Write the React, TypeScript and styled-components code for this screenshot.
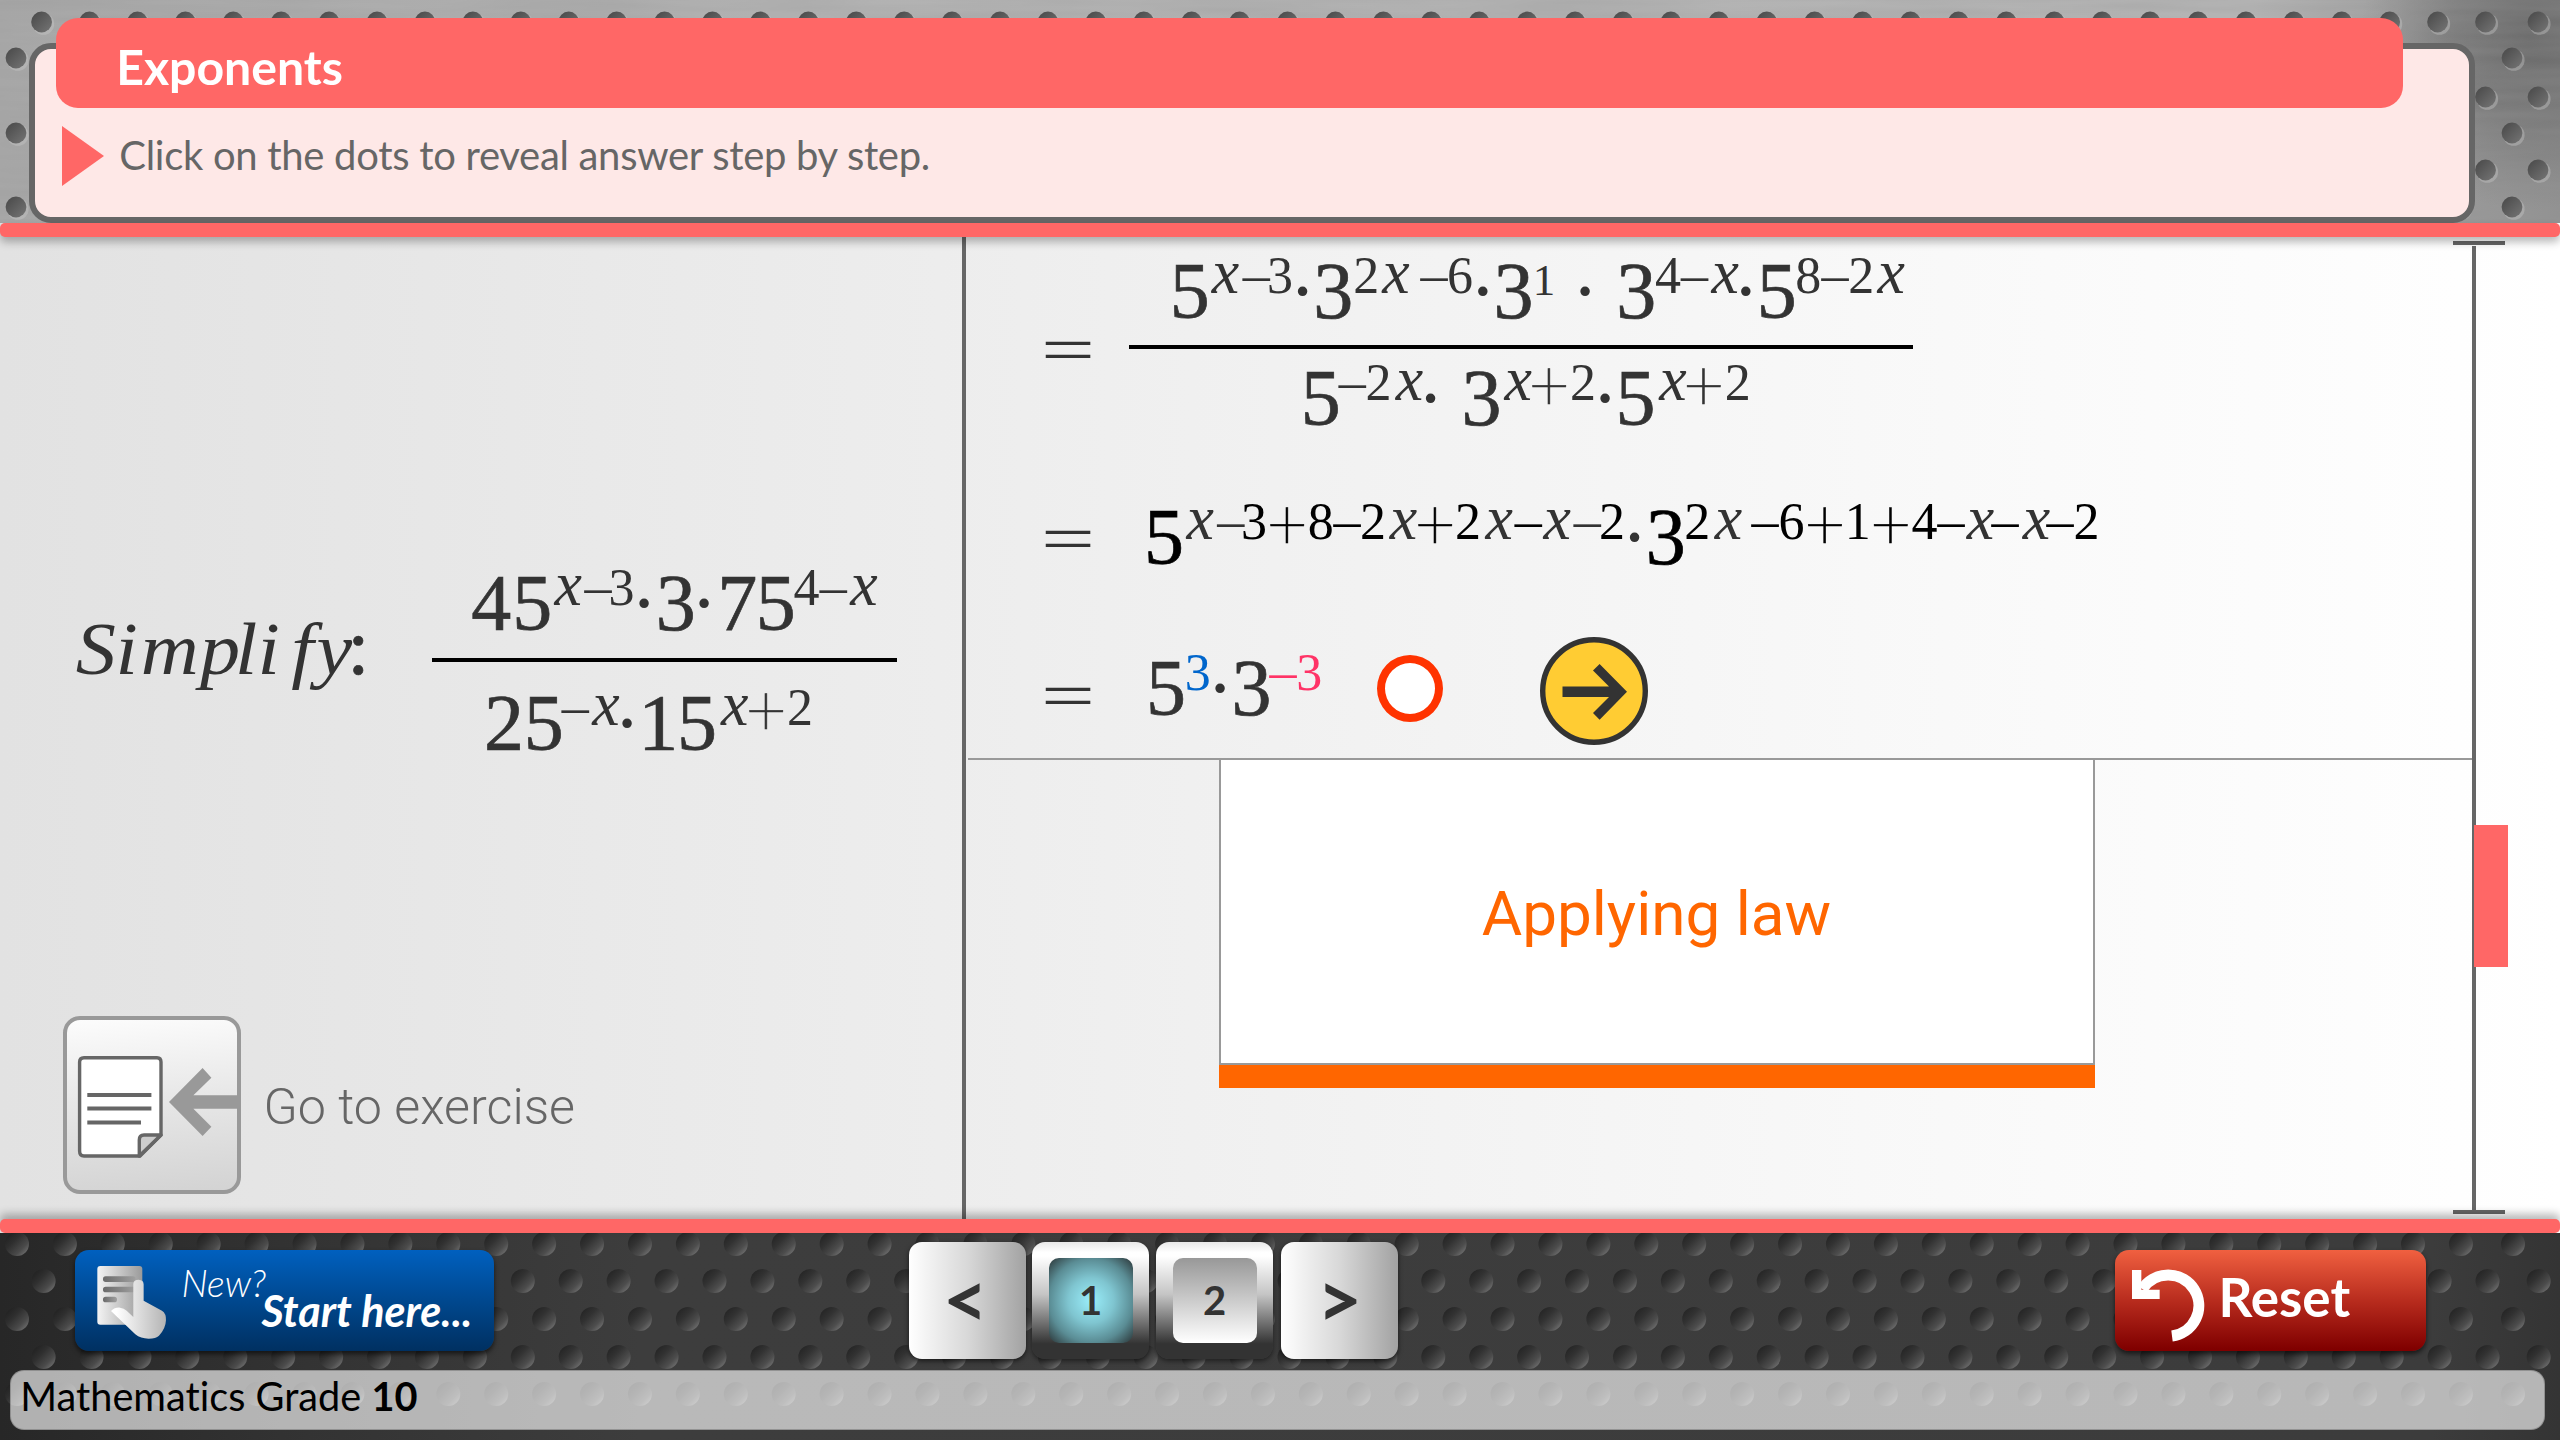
import React from 'react';
import styled, { createGlobalStyle } from 'styled-components';

const CORAL = '#ff6766';
const GREY = '#666666';

const GlobalStyle = createGlobalStyle`
  * { box-sizing: border-box; }
  html, body { margin: 0; padding: 0; overflow: hidden; }
  body { font-family: Lato, "Liberation Sans", sans-serif; font-variant-ligatures: none; }
`;

const Screen = styled.div`
  width: 2560px;
  height: 1440px;
  display: flex;
  flex-direction: column;
  overflow: hidden;
  background: linear-gradient(90deg, #e2e2e2 0%, #eeeeee 40%, #f9f9f9 76%, #ffffff 100%);
`;

/* ---------- perforated metal ---------- */

const MetalSvg = styled.svg`
  position: absolute;
  inset: 0;
  display: block;
`;

const columns = (phase: number, last: number) => [
  ...Array.from({ length: 52 }, (_, i) => phase + i * 47.92),
  last,
];

const perforation = (rows: { y: number; offset: boolean }[], a: [number, number], b: [number, number]) =>
  rows.flatMap((r) => (r.offset ? columns(b[0], b[1]) : columns(a[0], a[1])).map((x) => ({ x, y: r.y })));

const headerHoles = perforation(
  [
    { y: 22, offset: false },
    { y: 58, offset: true },
    { y: 97, offset: false },
    { y: 133, offset: true },
    { y: 170, offset: false },
    { y: 207, offset: true },
  ],
  [41.6, 2538],
  [16, 2512],
);

const footerDents = perforation(
  [
    { y: 11, offset: false },
    { y: 48, offset: true },
    { y: 86, offset: false },
    { y: 124, offset: true },
    { y: 161, offset: false },
  ],
  [17, 2513],
  [43.6, 2538.7],
);

const HeaderMetal = () => (
  <MetalSvg width="2560" height="223" viewBox="0 0 2560 223">
    <defs>
      <linearGradient id="hm" x1="0" y1="0" x2="1" y2="0">
        <stop offset="0" stopColor="#a8a8a8" />
        <stop offset="0.3" stopColor="#b2b2b2" />
        <stop offset="0.88" stopColor="#b4b4b4" />
        <stop offset="0.96" stopColor="#999999" />
        <stop offset="1" stopColor="#929292" />
      </linearGradient>
      <radialGradient id="hv" gradientUnits="userSpaceOnUse" cx="2530" cy="40" r="170">
        <stop offset="0" stopColor="#484848" stopOpacity="0.55" />
        <stop offset="0.5" stopColor="#505050" stopOpacity="0.35" />
        <stop offset="1" stopColor="#606060" stopOpacity="0" />
      </radialGradient>
      <linearGradient id="hole" x1="0" y1="0" x2="1" y2="1">
        <stop offset="0.1" stopColor="#4c4c4c" />
        <stop offset="1" stopColor="#757575" />
      </linearGradient>
      <filter id="brush" x="0" y="0" width="1" height="1">
        <feTurbulence type="fractalNoise" baseFrequency="0.006 0.09" numOctaves="2" seed="4" />
        <feColorMatrix values="0 0 0 0 0.3  0 0 0 0 0.3  0 0 0 0 0.3  0.5 0 0 0 -0.12" />
      </filter>
    </defs>
    <rect width="2560" height="223" fill="url(#hm)" />
    <rect width="2560" height="223" fill="url(#hv)" />
    <rect width="2560" height="223" filter="url(#brush)" />
    {headerHoles.map((h, i) => (
      <g key={i}>
        <circle cx={h.x + 1.8} cy={h.y + 2} r="10.8" fill="#c8c8c8" fillOpacity="0.4" />
        <circle cx={h.x} cy={h.y} r="10.4" fill="url(#hole)" />
      </g>
    ))}
  </MetalSvg>
);

const FooterMetal = () => (
  <MetalSvg width="2560" height="207" viewBox="0 0 2560 207">
    <defs>
      <linearGradient id="fm" x1="0" y1="0" x2="1" y2="0">
        <stop offset="0" stopColor="#272727" />
        <stop offset="0.12" stopColor="#333333" />
        <stop offset="0.25" stopColor="#3d3d3d" />
        <stop offset="0.95" stopColor="#3c3c3c" />
        <stop offset="1" stopColor="#343434" />
      </linearGradient>
      <linearGradient id="dent" x1="0.1" y1="0.1" x2="0.9" y2="0.9">
        <stop offset="0" stopColor="#202020" />
        <stop offset="0.35" stopColor="#303030" />
        <stop offset="0.75" stopColor="#505050" />
        <stop offset="1" stopColor="#7a7a7a" />
      </linearGradient>
    </defs>
    <rect width="2560" height="207" fill="url(#fm)" />
    {footerDents.map((h, i) => (
      <circle key={i} cx={h.x} cy={h.y} r="12" fill="url(#dent)" fillOpacity="0.85" />
    ))}
  </MetalSvg>
);

/* ---------- header ---------- */

const Header = styled.header`
  position: relative;
  height: 223px;
  padding: 42.5px 0 0 28.8px;
`;

const InfoPanel = styled.section`
  position: relative;
  width: 2446.6px;
  height: 180px;
  border: 6px solid ${GREY};
  border-radius: 22px;
  background: #fee8e7;
`;

const TitleBar = styled.h1`
  margin: -30.5px 0 0 20.9px;
  width: 2347px;
  height: 90px;
  padding: 4px 0 0 60.5px;
  border-radius: 22px;
  background: ${CORAL};
  color: #fff;
  font-size: 48.2px;
  font-weight: 700;
  line-height: 88px;
`;

const Instruction = styled.div`
  display: flex;
  align-items: flex-start;
  padding: 18px 0 0 27px;
`;

const Pointer = styled.svg`
  display: block;
  width: 42px;
  height: 60px;
`;

const InstructionText = styled.p`
  margin: 1px 0 0 15.5px;
  color: ${GREY};
  font-size: 40px;
  letter-spacing: -0.3px;
  line-height: 56px;
  white-space: nowrap;
`;

const Stripe = styled.div<{ $dir: number }>`
  position: relative;
  z-index: 2;
  height: 14px;
  flex: none;
  border-radius: 5px;
  background: ${CORAL};
  box-shadow: 0 ${(p) => p.$dir * 5}px 9px rgba(0, 0, 0, 0.28);
`;

/* ---------- mathematics ---------- */

type Kind = 'num' | 'sup' | 'supSmall' | 'var' | 'minus' | 'plus' | 'dot' | 'word';
/* glyph, kind, left edge, right edge, optional colour */
type Glyph = [string, Kind, number, number, string?];

const kindStyle: Record<Kind, string> = {
  num: 'font-size: 80px; transform: translateX(1px); -webkit-text-stroke: 0.7px currentColor;',
  sup: 'font-size: 52px; vertical-align: 25px;',
  supSmall: 'font-size: 45px; vertical-align: 23px;',
  var: 'font-size: 63px; font-style: italic; vertical-align: 25px; transform: scaleX(0.98);',
  minus: 'font-size: 52px; vertical-align: 26px; transform: scaleX(1.04);',
  plus: 'font-size: 68px; vertical-align: 16px; font-family: Roboto, sans-serif; font-weight: 100; -webkit-text-stroke: 0.6px currentColor;',
  dot: 'font-size: 80px;',
  word: 'font-size: 73px; font-style: italic; transform: scaleX(1.1);',
};

const Line = styled.div<{ $gap?: number }>`
  height: 80px;
  margin-top: ${(p) => p.$gap ?? 0}px;
  font-family: "Liberation Serif", serif;
  font-size: 80px;
  line-height: 80px;
  color: #333;
  white-space: nowrap;
`;

const Cell = styled.span<{ $kind: Kind; $w: number; $before: number; $color?: string }>`
  display: inline-flex;
  justify-content: center;
  width: ${(p) => p.$w}px;
  margin-left: ${(p) => p.$before}px;
  line-height: 0;
  color: ${(p) => p.$color ?? 'inherit'};
  ${(p) => kindStyle[p.$kind]}
`;

const MathLine = ({ glyphs, start, gap }: { glyphs: Glyph[]; start: number; gap?: number }) => (
  <Line $gap={gap}>
    {glyphs.map(([ch, kind, l, r, color], i) => (
      <Cell key={i} $kind={kind} $w={r - l} $before={l - (i ? glyphs[i - 1][3] : start)} $color={color}>
        {ch}
      </Cell>
    ))}
  </Line>
);

const FractionBar = styled.div<{ $w: number; $gap: number }>`
  width: ${(p) => p.$w}px;
  height: 4px;
  margin-top: ${(p) => p.$gap}px;
  background: #000;
`;

const simplify: Glyph[] = [
  ['S', 'word', 75, 116.5],
  ['i', 'word', 117, 136.4],
  ['m', 'word', 141, 198.4],
  ['p', 'word', 201, 239],
  ['l', 'word', 239, 253.5],
  ['i', 'word', 258.7, 278],
  ['f', 'word', 285, 320],
  ['y', 'word', 318, 350.5],
  [':', 'num', 353, 362],
];

const questionTop: Glyph[] = [
  ['4', 'num', 472, 508.4],
  ['5', 'num', 515, 547.4],
  ['x', 'var', 554, 582.4],
  ['–', 'minus', 584.7, 611],
  ['3', 'sup', 610.5, 632.4],
  ['·', 'dot', 639, 649],
  ['3', 'num', 658, 691.5],
  ['·', 'dot', 699, 709],
  ['7', 'num', 719, 753.5],
  ['5', 'num', 758.6, 790.8],
  ['4', 'sup', 795, 818.3],
  ['–', 'minus', 820, 846.4],
  ['x', 'var', 850, 878],
];

const questionBottom: Glyph[] = [
  ['2', 'num', 486.6, 519.3],
  ['5', 'num', 526.7, 559],
  ['–', 'minus', 562.3, 588.7],
  ['x', 'var', 592, 620],
  ['·', 'dot', 622, 632],
  ['1', 'num', 643.4, 671],
  ['5', 'num', 680, 712.3],
  ['x', 'var', 720.7, 748.3],
  ['+', 'plus', 749.4, 783.3],
  ['2', 'sup', 789, 811.4],
];

const step1Top: Glyph[] = [
  ['5', 'num', 1172.6, 1205],
  ['x', 'var', 1211.3, 1240],
  ['–', 'minus', 1242, 1270.6],
  ['3', 'sup', 1269, 1291],
  ['·', 'dot', 1297.6, 1307.6],
  ['3', 'num', 1315.8, 1349],
  ['2', 'sup', 1355, 1377.4],
  ['x', 'var', 1382, 1410],
  ['–', 'minus', 1420.8, 1447],
  ['6', 'sup', 1449, 1471],
  ['·', 'dot', 1478, 1488],
  ['3', 'num', 1496, 1529],
  ['1', 'supSmall', 1536.5, 1551.7],
  ['·', 'dot', 1580.5, 1590],
  ['3', 'num', 1618.6, 1652],
  ['4', 'sup', 1656.8, 1679.6],
  ['–', 'minus', 1681, 1708],
  ['x', 'var', 1710.8, 1739],
  ['·', 'dot', 1741, 1751],
  ['5', 'num', 1760, 1792],
  ['8', 'sup', 1798, 1819],
  ['–', 'minus', 1821.7, 1848],
  ['2', 'sup', 1850.4, 1872.7],
  ['x', 'var', 1877, 1905.6],
];

const step1Bottom: Glyph[] = [
  ['5', 'num', 1303.5, 1336],
  ['–', 'minus', 1339, 1365.7],
  ['2', 'sup', 1368, 1389],
  ['x', 'var', 1395, 1423.8],
  ['·', 'dot', 1425.5, 1435.5],
  ['3', 'num', 1464, 1497],
  ['x', 'var', 1503.6, 1532],
  ['+', 'plus', 1532.3, 1566.4],
  ['2', 'sup', 1572, 1594],
  ['·', 'dot', 1600.4, 1610],
  ['5', 'num', 1618.5, 1650.5],
  ['x', 'var', 1659, 1687],
  ['+', 'plus', 1687, 1721],
  ['2', 'sup', 1726.6, 1749],
];

const K = '#000000';
const step2: Glyph[] = [
  ['5', 'num', 1146.5, 1179.4, K],
  ['x', 'var', 1186.4, 1215],
  ['–', 'minus', 1216.6, 1244],
  ['3', 'sup', 1243, 1265, K],
  ['+', 'plus', 1270, 1305, K],
  ['8', 'sup', 1310, 1331.7, K],
  ['–', 'minus', 1333.8, 1359.7, K],
  ['2', 'sup', 1361.8, 1384.3, K],
  ['x', 'var', 1389, 1418],
  ['+', 'plus', 1418, 1453, K],
  ['2', 'sup', 1457, 1479, K],
  ['x', 'var', 1484.6, 1513],
  ['–', 'minus', 1515.5, 1542, K],
  ['x', 'var', 1543.5, 1572],
  ['–', 'minus', 1574.4, 1601],
  ['2', 'sup', 1601.7, 1622.8, K],
  ['·', 'dot', 1629.8, 1639.6],
  ['3', 'num', 1648, 1682, K],
  ['2', 'sup', 1686.6, 1708.4, K],
  ['x', 'var', 1714, 1742.8],
  ['–', 'minus', 1752.6, 1778.5, K],
  ['6', 'sup', 1780.6, 1803, K],
  ['+', 'plus', 1808, 1842.4, K],
  ['1', 'sup', 1848.7, 1867, K],
  ['+', 'plus', 1874, 1908.3, K],
  ['4', 'sup', 1913, 1936.4, K],
  ['–', 'minus', 1937.8, 1963.7, K],
  ['x', 'var', 1966.5, 1995.3],
  ['–', 'minus', 1992.5, 2018.5, K],
  ['x', 'var', 2022, 2050.8],
  ['–', 'minus', 2047, 2073, K],
  ['2', 'sup', 2076, 2097.7, K],
];

const step3: Glyph[] = [
  ['5', 'num', 1149.3, 1180.8],
  ['3', 'sup', 1186.4, 1209, '#0066cc'],
  ['·', 'dot', 1215, 1225],
  ['3', 'num', 1234, 1267],
  ['–', 'minus', 1270, 1296, '#ff3366'],
  ['3', 'sup', 1298, 1320.4, '#ff3366'],
];

/* ---------- work area ---------- */

const Main = styled.main`
  height: 982px;
  flex: none;
  display: flex;
`;

const QuestionPane = styled.section`
  width: 966px;
  border-right: 4px solid ${GREY};
  display: flex;
  flex-direction: column;
  justify-content: space-between;
`;

const Question = styled.div`
  display: flex;
  padding: 326px 0 0 0;
`;

const PromptCol = styled.div`
  width: 432px;
  padding-top: 43.5px;
`;

const ExerciseLink = styled.div`
  display: flex;
  align-items: center;
  gap: 22.5px;
  padding: 0 0 25px 63px;
  color: ${GREY};
  font-family: Roboto, sans-serif;
  font-size: 50.2px;
  font-weight: 300;
  line-height: 60px;
  white-space: nowrap;
`;

const ExerciseLabel = styled.span`
  padding-top: 4px;
`;

const ExerciseButton = styled.button`
  width: 178px;
  height: 178px;
  padding: 0;
  border: 4px solid #999;
  border-radius: 17px;
  background: linear-gradient(176deg, #fcfcfc 0%, #e8e8e8 45%, #d3d3d3 100%);
`;

const AnswerPane = styled.section`
  width: 1506px;
  display: flex;
  flex-direction: column;
`;

const Steps = styled.div`
  height: 523px;
  margin-left: 2px;
  padding-left: 76.7px;
  border-bottom: 2px solid #999;
  display: flex;
  flex-direction: column;
`;

const Step = styled.div<{ $h: number; $top: number }>`
  height: ${(p) => p.$h}px;
  padding-top: ${(p) => p.$top}px;
  display: flex;
  align-items: flex-start;
`;

const Equals = styled.span<{ $top: number }>`
  width: 46px;
  margin-top: ${(p) => p.$top}px;
  display: flex;
  justify-content: center;
  font-family: "Liberation Serif", serif;
  font-size: 66px;
  line-height: 66px;
  color: #333;
  transform: scaleX(1.45);
`;

const Fraction = styled.div`
  margin-left: 38.3px;
`;

const DotButton = styled.button`
  width: 66px;
  height: 67px;
  margin: 7px 0 0 57px;
  border: 8px solid #ff3300;
  border-radius: 50%;
  background: #fff;
`;

const NextSvg = styled.svg`
  display: block;
  width: 108px;
  height: 108px;
  margin: -11px 0 0 97px;
`;

const Card = styled.div`
  width: 876px;
  height: 328px;
  margin-left: 253.4px;
  display: flex;
  flex-direction: column;
`;

const CardFace = styled.div`
  height: 305px;
  border: 2px solid #999;
  border-top: 0;
  background: #fff;
  display: flex;
  align-items: center;
  justify-content: center;
  padding: 4px 2px 0 0;
  color: #ff6600;
  font-family: Roboto, sans-serif;
  font-size: 62px;
  line-height: 70px;
`;

const CardFoot = styled.div`
  height: 23px;
  background: #ff6600;
`;

const ScrollRail = styled.aside`
  width: 88px;
  display: flex;
  flex-direction: column;
  padding-top: 4px;
`;

const RailCap = styled.div`
  width: 52.5px;
  height: 4px;
  margin-left: -19.3px;
  background: ${GREY};
`;

const RailTrack = styled.div`
  height: 964px;
  margin-top: 1px;
  border-left: 4px solid ${GREY};
  padding-top: 579px;
`;

const RailThumb = styled.div`
  width: 34px;
  height: 142px;
  margin-left: -2px;
  background: ${CORAL};
`;

/* ---------- footer ---------- */

const Footer = styled.footer`
  position: relative;
  height: 207px;
`;

const Controls = styled.div`
  position: relative;
  height: 137px;
  display: flex;
  align-items: flex-start;
`;

const StartButton = styled.button`
  width: 419.5px;
  height: 101px;
  margin: 17px 0 0 74.6px;
  padding: 13px 0 0 20px;
  border: 0;
  border-radius: 14px;
  background: linear-gradient(#0060bf, #00488f 50%, #003061);
  box-shadow: 0 3px 5px rgba(0, 0, 0, 0.6);
  display: flex;
  align-items: flex-start;
  color: #fff;
  font-family: Lato, sans-serif;
  font-style: italic;
  white-space: nowrap;
`;

const NewText = styled.span`
  width: 80px;
  margin: -5.5px 0 0 13.5px;
  text-align: left;
  font-size: 37.5px;
  font-weight: 300;
  line-height: 50px;
`;

const StartText = styled.span`
  margin-top: 21px;
  font-size: 43.2px;
  font-weight: 700;
  line-height: 52px;
`;

const Pager = styled.nav`
  display: flex;
  margin: 9.3px 0 0 414.8px;
`;

const ArrowKey = styled.button<{ $before?: number; $nudge?: number }>`
  display: flex;
  justify-content: center;
  align-items: flex-start;
  width: 117px;
  height: 117px;
  margin-left: ${(p) => p.$before ?? 0}px;
  padding: 0 ${(p) => p.$nudge ?? 0}px 0 0;
  border: 0;
  border-radius: 13px;
  background: linear-gradient(90deg, #ffffff 0%, #d8d8d8 50%, #a2a2a2 100%);
  box-shadow: 0 2px 5px rgba(0, 0, 0, 0.6);
  color: #333;
  font-family: Lato, sans-serif;
  font-size: 78px;
  font-weight: 700;
  line-height: 112px;
`;

const PageKey = styled.button<{ $before: number }>`
  display: flex;
  align-items: flex-start;
  width: 117px;
  height: 117px;
  margin-left: ${(p) => p.$before}px;
  padding: 16px 0 0 16.5px;
  border: 0;
  border-radius: 13px;
  background: linear-gradient(#e8e8e8 0%, #ffffff 9%, #ffffff 12%, #c4c4c4 45%, #333333 87%, #333333 100%);
  box-shadow: 0 2px 5px rgba(0, 0, 0, 0.5);
`;

const PageFace = styled.span<{ $active?: boolean }>`
  display: block;
  width: 84px;
  height: 85px;
  border-radius: 10px;
  background: ${(p) =>
    p.$active
      ? 'radial-gradient(circle at 50% 50%, #9aeefb 0%, #7fc5d0 38%, #5a8c94 70%, #2a3436 100%)'
      : 'linear-gradient(#989898, #ffffff)'};
  color: #333;
  font-family: Lato, sans-serif;
  font-size: 40px;
  font-weight: 700;
  line-height: 84px;
  text-align: center;
`;

const ResetButton = styled.button`
  width: 311px;
  height: 101px;
  margin: 17px 0 0 716.6px;
  padding: 18px 0 0 15.3px;
  border: 0;
  border-radius: 14px;
  background: linear-gradient(#f06040, #b82c1e 50%, #800000 98%);
  box-shadow: 0 3px 5px rgba(0, 0, 0, 0.6);
  display: flex;
  align-items: flex-start;
  color: #fff;
  font-family: Lato, sans-serif;
  font-size: 53px;
  font-weight: 700;
  line-height: 60px;
`;

const ResetText = styled.span`
  margin: -1px 0 0 13.5px;
`;

const StatusBar = styled.div`
  position: relative;
  width: 2535px;
  height: 60px;
  margin-left: 9.8px;
  padding: 0 0 0 9.5px;
  border-radius: 14px;
  border: 1px solid rgba(110, 110, 110, 0.5);
  background: rgba(255, 255, 255, 0.64);
  color: #000;
  font-size: 39.7px;
  line-height: 50px;
  white-space: nowrap;
`;

/* ---------- icons ---------- */

const BlockSvg = styled.svg`
  display: block;
  flex: none;
`;

const ExerciseIcon = () => (
  <BlockSvg width="170" height="170" viewBox="67 1020 170 170">
    <path
      d="M84 1057.7 H157 Q161 1057.7 161 1062 V1135 L140 1156 H84 Q79.6 1156 79.6 1151 V1062 Q79.6 1057.7 84 1057.7 Z"
      fill="#fff"
      stroke="#666"
      strokeWidth="3.4"
    />
    <path d="M139.3 1156 V1140 Q139.3 1135 144 1135 H161 Z" fill="#ccc" stroke="#666" strokeWidth="3.4" strokeLinejoin="round" />
    <path d="M87.3 1095 H151.4 M87.3 1108.5 H151.4 M87.3 1122.5 H141" stroke="#666" strokeWidth="4" />
    <path d="M169 1102 L202.6 1068 L211.4 1077.7 L193.4 1095.3 H240 V1108.7 H193.4 L211.4 1126.7 L202.6 1136 Z" fill="#999" />
  </BlockSvg>
);

const NextIcon = () => (
  <NextSvg viewBox="0 0 108 108">
    <circle cx="54" cy="54" r="51.3" fill="#ffcc33" stroke="#333" strokeWidth="5.4" />
    <path d="M22.5 49.5 H69 L53 33.5 L59.6 27 L87 54.8 L59.6 82.7 L53 76 L69 60 H22.5 Z" fill="#333" />
  </NextSvg>
);

const HandIcon = () => (
  <BlockSvg width="73.3" height="78.3" viewBox="105 70 220 235">
    <defs>
      <linearGradient id="paper" x1="0" y1="0" x2="1" y2="0">
        <stop offset="0" stopColor="#f4f4f4" />
        <stop offset="1" stopColor="#9a9a9a" />
      </linearGradient>
      <linearGradient id="rule" x1="0" y1="0" x2="1" y2="0">
        <stop offset="0" stopColor="#6a6a6a" />
        <stop offset="1" stopColor="#a0a0a0" />
      </linearGradient>
      <linearGradient id="hand" x1="0" y1="0" x2="1" y2="0">
        <stop offset="0.1" stopColor="#ffffff" />
        <stop offset="1" stopColor="#b4b4b4" />
      </linearGradient>
    </defs>
    <rect x="112" y="79" width="135" height="176" rx="9" fill="url(#paper)" />
    <rect x="129" y="110" width="98" height="17" rx="8" fill="url(#rule)" />
    <rect x="129" y="141" width="98" height="17" rx="8" fill="url(#rule)" />
    <rect x="129" y="171" width="42" height="17" rx="8" fill="url(#rule)" />
    <path
      d="M220 232 V132 Q221 120 236 120 Q251 121 251 134 V183 L306 213 Q319 221 318 242 Q317 268 297 288 Q288 297 266 297 Q242 297 226 284 L153 214 Q164 203 180 204 Q192 205 200 213 Z"
      fill="url(#hand)"
    />
  </BlockSvg>
);

const ResetIcon = () => (
  <BlockSvg width="75" height="75" viewBox="240 205 225 225">
    <path d="M366 409 A92 92 0 1 0 277 268" fill="none" stroke="#fff" strokeWidth="33" />
    <path d="M246 211 H274 V270 H329 V298 H246 Z" fill="#fff" />
  </BlockSvg>
);

export default function App() {
  return (
    <>
      <GlobalStyle />
      <Screen>
        <Header>
          <HeaderMetal />
          <InfoPanel>
            <TitleBar>Exponents</TitleBar>
            <Instruction>
              <Pointer viewBox="0 0 42 60">
                <path d="M0 0 L42 30 L0 60 Z" fill={CORAL} />
              </Pointer>
              <InstructionText>Click on the dots to reveal answer step by step.</InstructionText>
            </Instruction>
          </InfoPanel>
        </Header>
        <Stripe $dir={1} />
        <Main>
          <QuestionPane>
            <Question>
              <PromptCol>
                <MathLine glyphs={simplify} start={0} />
              </PromptCol>
              <div>
                <MathLine glyphs={questionTop} start={432} />
                <FractionBar $w={465} $gap={14.5} />
                <MathLine glyphs={questionBottom} start={432} gap={21} />
              </div>
            </Question>
            <ExerciseLink>
              <ExerciseButton>
                <ExerciseIcon />
              </ExerciseButton>
              <ExerciseLabel>Go to exercise</ExerciseLabel>
            </ExerciseLink>
          </QuestionPane>
          <AnswerPane>
            <Steps>
              <Step $h={260} $top={14}>
                <Equals $top={66}>=</Equals>
                <Fraction>
                  <MathLine glyphs={step1Top} start={1129} />
                  <FractionBar $w={783.7} $gap={14} />
                  <MathLine glyphs={step1Bottom} start={1129} gap={9} />
                </Fraction>
              </Step>
              <Step $h={151} $top={0}>
                <Equals $top={9}>=</Equals>
                <MathLine glyphs={step2} start={1090.7} />
              </Step>
              <Step $h={110} $top={0}>
                <Equals $top={15}>=</Equals>
                <MathLine glyphs={step3} start={1090.7} />
                <DotButton />
                <NextIcon />
              </Step>
            </Steps>
            <Card>
              <CardFace>Applying law</CardFace>
              <CardFoot />
            </Card>
          </AnswerPane>
          <ScrollRail>
            <RailCap />
            <RailTrack>
              <RailThumb />
            </RailTrack>
            <RailCap />
          </ScrollRail>
        </Main>
        <Stripe $dir={-1} />
        <Footer>
          <FooterMetal />
          <Controls>
            <StartButton>
              <HandIcon />
              <NewText>New?</NewText>
              <StartText>Start here...</StartText>
            </StartButton>
            <Pager>
              <ArrowKey $nudge={4}>&lt;</ArrowKey>
              <PageKey $before={6.2}>
                <PageFace $active>1</PageFace>
              </PageKey>
              <PageKey $before={7}>
                <PageFace>2</PageFace>
              </PageKey>
              <ArrowKey $before={8}>&gt;</ArrowKey>
            </Pager>
            <ResetButton>
              <ResetIcon />
              <ResetText>Reset</ResetText>
            </ResetButton>
          </Controls>
          <StatusBar>
            Mathematics Grade <b>10</b>
          </StatusBar>
        </Footer>
      </Screen>
    </>
  );
}
